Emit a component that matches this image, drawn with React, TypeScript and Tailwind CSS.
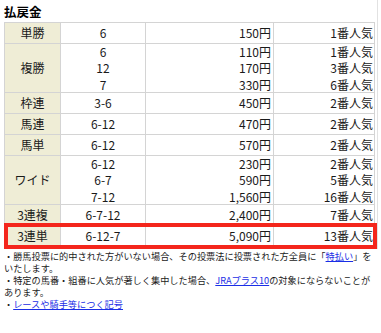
const FONT = { fontFamily: '"Noto Sans CJK JP", "Noto Sans", sans-serif' };

type Row = { kind: string; nums: string[]; pay: string[]; pop: string[]; hit?: boolean };

const rows: Row[] = [
  { kind: "単勝", nums: ["6"], pay: ["150円"], pop: ["1番人気"] },
  { kind: "複勝", nums: ["6", "12", "7"], pay: ["110円", "170円", "330円"], pop: ["1番人気", "3番人気", "6番人気"] },
  { kind: "枠連", nums: ["3-6"], pay: ["450円"], pop: ["2番人気"] },
  { kind: "馬連", nums: ["6-12"], pay: ["470円"], pop: ["2番人気"] },
  { kind: "馬単", nums: ["6-12"], pay: ["570円"], pop: ["2番人気"] },
  { kind: "ワイド", nums: ["6-12", "6-7", "7-12"], pay: ["230円", "590円", "1,560円"], pop: ["2番人気", "5番人気", "16番人気"] },
  { kind: "3連複", nums: ["6-7-12"], pay: ["2,400円"], pop: ["7番人気"] },
  { kind: "3連単", nums: ["6-12-7"], pay: ["5,090円"], pop: ["13番人気"], hit: true },
];

function Lines({ items }: { items: string[] }) {
  return (
    <>
      {items.map((t, i) => (
        <div key={i} className="leading-[16.3px]">
          {t}
        </div>
      ))}
    </>
  );
}

function PayRow({ row }: { row: Row }) {
  const h = row.nums.length > 1 ? "h-[49px]" : "h-[21px]";
  return (
    <div className={`relative grid grid-cols-[56px_85px_128px_102px] border-t border-[#d4d4d4] ${h}`}>
      <div className="flex items-center justify-center bg-[#efedd6] border-r border-[#d4d4d4]">{row.kind}</div>
      <div className="flex flex-col justify-center items-center border-r border-[#d4d4d4]">
        <Lines items={row.nums} />
      </div>
      <div className="flex flex-col justify-center items-end pr-[2px] border-r border-[#d4d4d4]">
        <Lines items={row.pay} />
      </div>
      <div className="flex flex-col justify-center items-end pr-[3px]">
        <Lines items={row.pop} />
      </div>
      {row.hit && (
        <div className="absolute -top-[3px] -bottom-[3px] -left-[1px] -right-[3px] border-4 border-[#f4261c] pointer-events-none" />
      )}
    </div>
  );
}

export default function App() {
  return (
    <div className="w-[381px] h-[333px] bg-white text-[#1a1a1a] overflow-hidden" style={FONT}>
      <div className="w-[378px] border-r border-[#e2e2e2] pl-[4px] pt-[3px] pb-[2px]">
        <h2 className="text-[12.5px] font-bold leading-[17px] h-[19px] text-black">払戻金</h2>
        <div className="w-[371px] border-l border-r border-b border-[#d4d4d4] text-[12px]">
          {rows.map((r) => (
            <PayRow key={r.kind} row={r} />
          ))}
        </div>
      </div>
      <div className="pl-[4px] pt-[1px] text-[9.2px] leading-[12px]">
        <p>
          ・勝馬投票に的中された方がいない場合、その投票法に投票された方全員に「
          <a href="#" className="text-[#1a2ee6] underline">特払い</a>」を
          <br />
          いたします。
        </p>
        <p>
          ・特定の馬番・組番に人気が著しく集中した場合、
          <a href="#" className="text-[#1a2ee6] underline">JRAプラス10</a>
          の対象にならないことが
          <br />
          あります。
        </p>
        <p>
          ・<a href="#" className="text-[#1a2ee6] underline">レースや騎手等につく記号</a>
        </p>
      </div>
    </div>
  );
}
